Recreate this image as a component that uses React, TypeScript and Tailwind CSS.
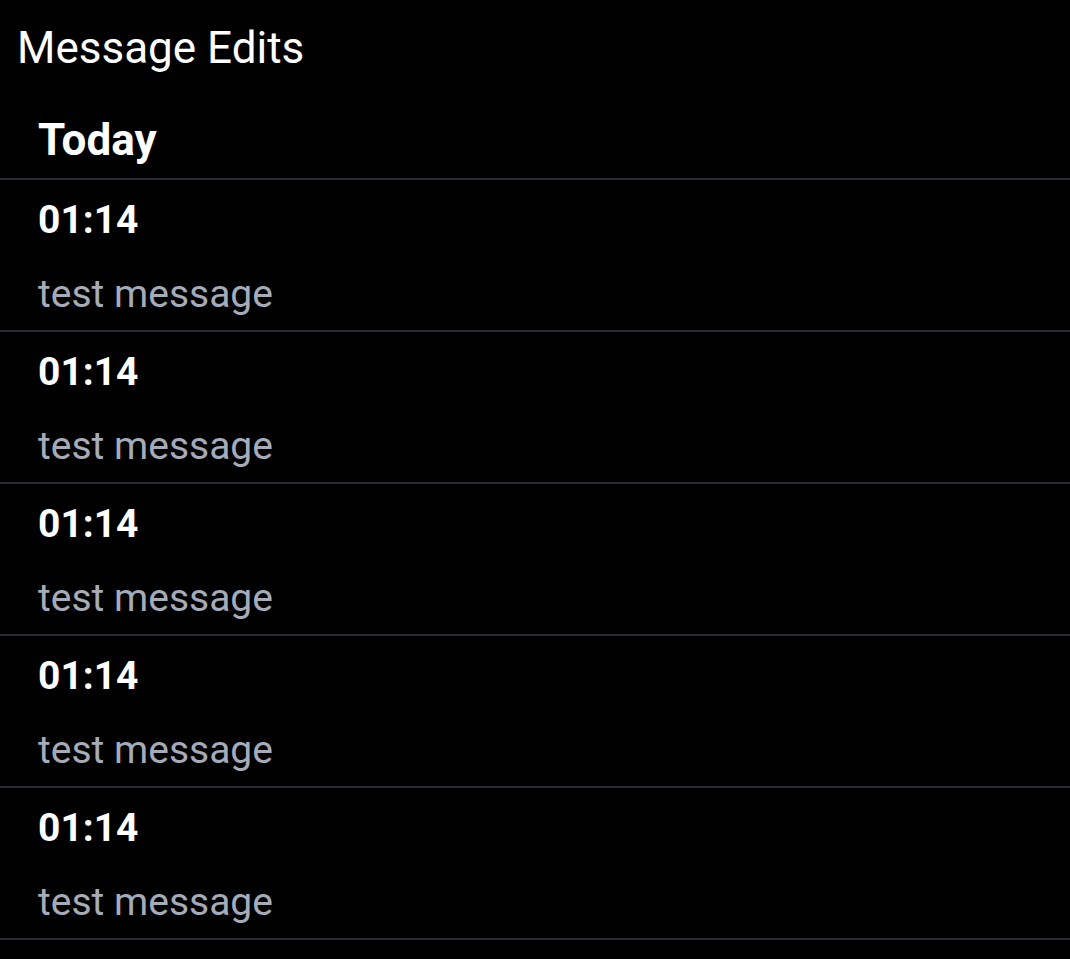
import React from "react";

const rows = Array.from({ length: 5 }, () => ({ time: "01:14", text: "test message" }));

export default function App() {
  return (
    <div
      className="w-[1070px] h-[959px] bg-black text-white overflow-hidden"
      style={{ fontFamily: "Roboto, 'Noto Sans', sans-serif" }}
    >
      <div className="pl-[17px] pt-[24px] text-[44px] leading-[48px] font-normal">Message Edits</div>
      <div className="pl-[38px] mt-[44px] pb-[14px] text-[44px] leading-[48px] font-bold border-b-2 border-[#2a2c32]">
        Today
      </div>
      {rows.map((r, i) => (
        <div key={i} className="pl-[38px] pt-[16px] pb-[12px] border-b-2 border-[#2a2c32]">
          <div className="text-[39px] leading-[48px] font-bold">{r.time}</div>
          <div className="mt-[26px] text-[39px] leading-[48px] text-[#a6acb7]">{r.text}</div>
        </div>
      ))}
    </div>
  );
}
